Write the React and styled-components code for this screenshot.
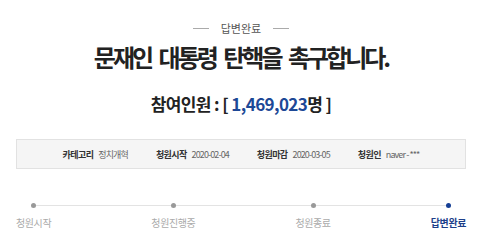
import React from "react";
import styled, { createGlobalStyle } from "styled-components";

const Global = createGlobalStyle`
  html, body { margin: 0; padding: 0; background: #fff; }
  body { font-family: "Noto Sans CJK KR", "Noto Sans", sans-serif; color: #222; }
`;

const Page = styled.div`
  width: 480px;
  height: 245px;
  padding: 19px 14px 0 16px;
  box-sizing: border-box;
  display: flex;
  flex-direction: column;
  align-items: stretch;
`;

const Status = styled.div`
  display: flex;
  align-items: center;
  justify-content: center;
  gap: 12px;
  font-size: 11px;
  color: #555;
  line-height: 18px;
  &::before, &::after {
    content: "";
    width: 16px;
    height: 1px;
    background: #aaa;
  }
`;

const Title = styled.h1`
  margin: 5px 0 0;
  text-align: center;
  font-size: 24px;
  font-weight: 700;
  line-height: 30px;
  color: #222;
  letter-spacing: -3px;
  word-spacing: 5px;
`;

const Count = styled.div`
  margin-top: 21px;
  text-align: center;
  font-size: 17px;
  font-weight: 700;
  line-height: 22px;
  color: #222;
  letter-spacing: -0.6px;
`;

const Num = styled.span`
  color: #1d4896;
`;

const InfoBox = styled.div`
  margin-top: 24px;
  height: 30px;
  box-sizing: border-box;
  border: 1px solid #e2e2e2;
  background: #f5f5f5;
  display: flex;
  align-items: center;
  justify-content: center;
  gap: 28px;
  font-size: 9px;
`;

const InfoItem = styled.div`
  display: flex;
  align-items: center;
  gap: 5px;
`;

const InfoLabel = styled.span`
  font-weight: 700;
  color: #333;
  letter-spacing: -0.6px;
`;

const InfoValue = styled.span`
  color: #666;
  letter-spacing: -0.9px;
`;

const Steps = styled.div`
  position: relative;
  margin-top: 34px;
  display: flex;
  justify-content: space-between;
  &::before {
    content: "";
    position: absolute;
    left: 15px;
    right: 15px;
    top: 2px;
    height: 1px;
    background: #e3e3e3;
  }
`;

const Step = styled.div`
  position: relative;
  display: flex;
  flex-direction: column;
  align-items: center;
  gap: 9px;
  font-size: 10px;
  line-height: 12px;
  letter-spacing: -0.4px;
  color: ${(p) => (p.$active ? "#1d3f8a" : "#aaa")};
  font-weight: ${(p) => (p.$active ? 700 : 400)};
`;

const Dot = styled.span`
  width: 5px;
  height: 5px;
  border-radius: 50%;
  background: ${(p) => (p.$active ? "#153f95" : "#999")};
`;

const steps = [
  { label: "청원시작" },
  { label: "청원진행중" },
  { label: "청원종료" },
  { label: "답변완료", active: true },
];

const info = [
  ["카테고리", "정치개혁"],
  ["청원시작", "2020-02-04"],
  ["청원마감", "2020-03-05"],
  ["청원인", "naver - ***"],
];

export default function App() {
  return (
    <>
      <Global />
      <Page>
        <Status>답변완료</Status>
        <Title>문재인 대통령 탄핵을 촉구합니다.</Title>
        <Count>
          참여인원 : [ <Num>1,469,023</Num>명 ]
        </Count>
        <InfoBox>
          {info.map(([k, v]) => (
            <InfoItem key={k}>
              <InfoLabel>{k}</InfoLabel>
              <InfoValue>{v}</InfoValue>
            </InfoItem>
          ))}
        </InfoBox>
        <Steps>
          {steps.map((s) => (
            <Step key={s.label} $active={s.active}>
              <Dot $active={s.active} />
              {s.label}
            </Step>
          ))}
        </Steps>
      </Page>
    </>
  );
}
